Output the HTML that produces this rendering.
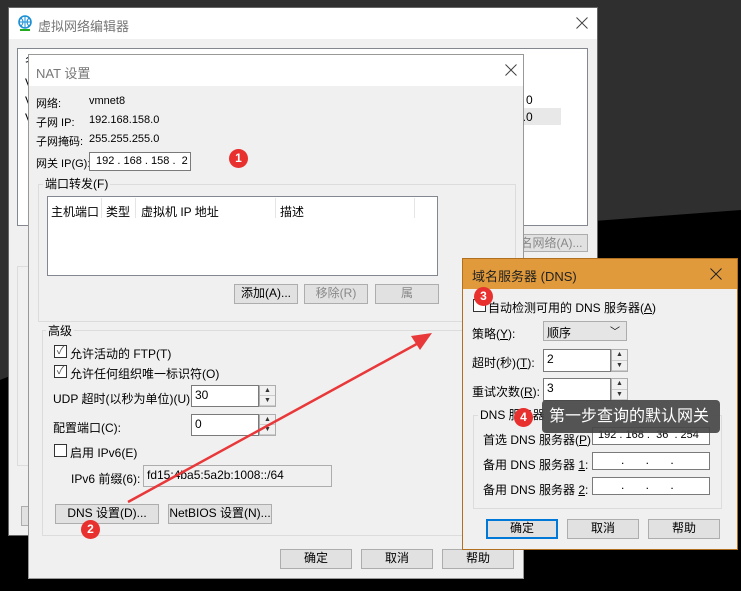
<!DOCTYPE html>
<html><head><meta charset="utf-8"><style>
*{margin:0;padding:0;box-sizing:border-box}
body{width:741px;height:591px;overflow:hidden;background:#000;position:relative;font-family:"Liberation Sans","Noto Sans CJK SC",sans-serif;font-size:12px;color:#000}
.a{position:absolute;white-space:nowrap}
.win{position:absolute;background:#f0f0f0;border:1px solid #888}
.tb{position:absolute;left:0;right:0;top:0;background:#fff}
.btn{position:absolute;background:#e1e1e1;border:1px solid #adadad;text-align:center;line-height:17px;white-space:nowrap}
.inp{position:absolute;background:#fff;border:1px solid #7a7a7a;white-space:nowrap;overflow:hidden}
.grp{position:absolute;border:1px solid #dcdcdc}
.lbl{position:absolute;background:#f0f0f0;padding:0 2px;line-height:14px;white-space:nowrap}
.cb{position:absolute;width:13px;height:13px;border:1px solid #333;background:#fff}
.badge{position:absolute;width:19px;height:19px;border-radius:50%;background:#e8302e;color:#fff;font-size:12px;font-weight:bold;text-align:center;line-height:19px}
.spin{position:absolute;width:17px;border:1px solid #adadad;background:#f0f0f0}
.spin div{height:50%;border-bottom:1px solid #ccc;font-size:7px;text-align:center;line-height:9px;color:#333}
.x{position:absolute}
.sm{font-size:11px}
</style></head><body>
<svg class="a" style="left:0;top:0" width="741" height="591"><polygon points="0,0 741,0 741,210 500,228 300,280 100,340 0,380" fill="#2f2f2f"/></svg>

<div class="win" style="left:8px;top:7px;width:590px;height:529px;border-color:#666">
 <div class="tb" style="height:31px"></div>
 <svg class="a" style="left:8px;top:7px" width="16" height="17"><circle cx="8" cy="7" r="6" fill="none" stroke="#1a8fd6" stroke-width="1.6"/><path d="M2 7h12M8 1v12M4 3q4 4 0 8M12 3q-4 4 0 8" stroke="#1a8fd6" fill="none"/><path d="M3 15h10" stroke="#2a2" stroke-width="2"/></svg>
 <div class="a" style="left:29px;top:8px;font-size:13px;color:#777">虚拟网络编辑器</div>
 <svg class="x" style="left:567px;top:9px" width="12" height="12"><path d="M0.5 0.5L11.5 11.5M11.5 0.5L0.5 11.5" stroke="#444" stroke-width="1"/></svg>
 <div class="a" style="left:8px;top:40px;width:571px;height:178px;background:#fff;border:1px solid #828790"></div>
 <div class="a" style="left:500px;top:100px;width:52px;height:17px;background:#e8e8e8"></div>
 <div class="a" style="left:517px;top:85px">0</div>
 <div class="a" style="left:507px;top:102px">3.0</div>
 <div class="a" style="left:16px;top:44px">名</div>
 <div class="a" style="left:16px;top:68px">V</div>
 <div class="a" style="left:16px;top:86px">V</div>
 <div class="a" style="left:16px;top:103px">V</div>
 <div class="btn" style="left:506px;top:226px;width:73px;height:18px;color:#888">名网络(A)...</div>
 <div class="grp" style="left:8px;top:258px;width:30px;height:200px"></div>
 <div class="btn" style="left:12px;top:498px;width:30px;height:20px">还</div>
</div>

<div class="win" style="left:28px;top:54px;width:496px;height:525px;border-color:#999">
 <div class="tb" style="height:31px"></div>
 <div class="a" style="left:7px;top:8px;font-size:13px;color:#777">NAT 设置</div>
 <svg class="x" style="left:476px;top:9px" width="12" height="12"><path d="M0.5 0.5L11.5 11.5M11.5 0.5L0.5 11.5" stroke="#444" stroke-width="1"/></svg>
 <div class="a sm" style="left:7px;top:40px">网络:</div><div class="a sm" style="left:60px;top:40px">vmnet8</div>
 <div class="a sm" style="left:7px;top:59px">子网 IP:</div><div class="a sm" style="left:60px;top:59px">192.168.158.0</div>
 <div class="a sm" style="left:7px;top:78px">子网掩码:</div><div class="a sm" style="left:60px;top:78px">255.255.255.0</div>
 <div class="a sm" style="left:7px;top:100px">网关 IP(G):</div>
 <div class="inp sm" style="left:60px;top:97px;width:102px;height:19px;padding:2px 0 0 6px">192 . 168 . 158 .&nbsp; 2</div>
 <div class="grp" style="left:9px;top:129px;width:478px;height:138px"></div>
 <div class="lbl" style="left:14px;top:122px">端口转发(F)</div>
 <div class="a" style="left:18px;top:141px;width:391px;height:80px;background:#fff;border:1px solid #828790"></div>
 <div class="a" style="left:22px;top:148px">主机端口</div>
 <div class="a" style="left:72px;top:143px;width:1px;height:20px;background:#e5e5e5"></div>
 <div class="a" style="left:77px;top:148px">类型</div>
 <div class="a" style="left:106px;top:143px;width:1px;height:20px;background:#e5e5e5"></div>
 <div class="a" style="left:112px;top:148px">虚拟机 IP 地址</div>
 <div class="a" style="left:246px;top:143px;width:1px;height:20px;background:#e5e5e5"></div>
 <div class="a" style="left:251px;top:148px">描述</div>
 <div class="a" style="left:385px;top:143px;width:1px;height:20px;background:#e5e5e5"></div>
 <div class="btn" style="left:205px;top:229px;width:64px;height:20px">添加(A)...</div>
 <div class="btn" style="left:275px;top:229px;width:64px;height:20px;color:#888">移除(R)</div>
 <div class="btn" style="left:346px;top:229px;width:64px;height:20px;color:#888">属</div>
 <div class="grp" style="left:13px;top:275px;width:474px;height:206px"></div>
 <div class="lbl" style="left:17px;top:269px">高级</div>
 <div class="cb" style="left:25px;top:290px;font-size:11px;line-height:11px;text-align:center;color:#555">✓</div><div class="a" style="left:41px;top:290px">允许活动的 FTP(T)</div>
 <div class="cb" style="left:25px;top:310px;font-size:11px;line-height:11px;text-align:center;color:#555">✓</div><div class="a" style="left:41px;top:310px">允许任何组织唯一标识符(O)</div>
 <div class="a" style="left:24px;top:335px">UDP 超时(以秒为单位)(U):</div>
 <div class="inp" style="left:162px;top:330px;width:68px;height:22px;padding:2px 3px">30</div>
 <div class="spin" style="left:230px;top:330px;height:22px"><div>▲</div><div>▼</div></div>
 <div class="a" style="left:24px;top:364px">配置端口(C):</div>
 <div class="inp" style="left:162px;top:359px;width:68px;height:22px;padding:2px 3px">0</div>
 <div class="spin" style="left:230px;top:359px;height:22px"><div>▲</div><div>▼</div></div>
 <div class="cb" style="left:25px;top:389px"></div><div class="a" style="left:41px;top:389px">启用 IPv6(E)</div>
 <div class="a" style="left:42px;top:415px">IPv6 前缀(6):</div>
 <div class="inp" style="left:114px;top:410px;width:189px;height:22px;padding:2px 3px;background:#f0f0f0;border-color:#adadad">fd15:4ba5:5a2b:1008::/64</div>
 <div class="btn" style="left:26px;top:449px;width:104px;height:20px">DNS 设置(D)...</div>
 <div class="btn" style="left:139px;top:449px;width:104px;height:20px">NetBIOS 设置(N)...</div>
 <div class="btn" style="left:251px;top:494px;width:72px;height:20px">确定</div>
 <div class="btn" style="left:332px;top:494px;width:72px;height:20px">取消</div>
 <div class="btn" style="left:413px;top:494px;width:72px;height:20px">帮助</div>
</div>

<div class="win" style="left:462px;top:258px;width:276px;height:292px;border-color:#b07020">
 <div class="tb" style="height:30px;background:#e09a3b"></div>
 <div class="a" style="left:9px;top:7px;font-size:13px;color:#222">域名服务器 (DNS)</div>
 <svg class="x" style="left:247px;top:9px" width="12" height="12"><path d="M0.5 0.5L11.5 11.5M11.5 0.5L0.5 11.5" stroke="#222" stroke-width="1"/></svg>
 <div class="cb" style="left:10px;top:40px"></div><div class="a" style="left:25px;top:40px">自动检测可用的 DNS 服务器(<u>A</u>)</div>
 <div class="a" style="left:9px;top:66px">策略(<u>Y</u>):</div>
 <div class="a" style="left:80px;top:62px;width:84px;height:20px;background:#e5e5e5;border:1px solid #adadad;padding:2px 3px">顺序<span style="position:absolute;right:6px;top:1px;font-size:10px">﹀</span></div>
 <div class="a" style="left:9px;top:95px">超时(秒)(<u>T</u>):</div>
 <div class="inp" style="left:80px;top:90px;width:68px;height:23px;padding:2px 3px">2</div>
 <div class="spin" style="left:148px;top:90px;height:23px"><div>▲</div><div>▼</div></div>
 <div class="a" style="left:9px;top:124px">重试次数(<u>R</u>):</div>
 <div class="inp" style="left:80px;top:119px;width:68px;height:23px;padding:2px 3px">3</div>
 <div class="spin" style="left:148px;top:119px;height:23px"><div>▲</div><div>▼</div></div>
 <div class="grp" style="left:10px;top:156px;width:249px;height:94px"></div>
 <div class="lbl" style="left:15px;top:149px">DNS 服务器</div>
 <div class="a" style="left:20px;top:172px">首选 DNS 服务器(<u>P</u>):</div>
 <div class="inp sm" style="left:129px;top:168px;width:118px;height:18px;padding:1px 5px">192 . 168 .&nbsp; 36 &nbsp;. 254</div>
 <div class="a" style="left:20px;top:197px">备用 DNS 服务器 <u>1</u>:</div>
 <div class="inp" style="left:129px;top:193px;width:118px;height:18px;padding:0 28px;word-spacing:18px">. . .</div>
 <div class="a" style="left:20px;top:222px">备用 DNS 服务器 <u>2</u>:</div>
 <div class="inp" style="left:129px;top:218px;width:118px;height:18px;padding:0 28px;word-spacing:18px">. . .</div>
 <div class="btn" style="left:23px;top:260px;width:72px;height:20px;border:2px solid #0078d7;line-height:15px">确定</div>
 <div class="btn" style="left:104px;top:260px;width:72px;height:20px">取消</div>
 <div class="btn" style="left:185px;top:260px;width:72px;height:20px">帮助</div>
</div>

<div class="a" style="left:542px;top:400px;width:178px;height:33px;background:rgba(70,70,70,0.92);border-radius:4px;color:#fff;font-size:16px;line-height:33px;padding-left:7px">第一步查询的默认网关</div>

<svg class="a" style="left:0;top:0" width="741" height="591"><path d="M128 502 L424 340" stroke="#e8383a" stroke-width="2.5"/><polygon points="432,333 411,336 420,350" fill="#e8383a"/></svg>

<div class="badge" style="left:229px;top:149px">1</div>
<div class="badge" style="left:81px;top:520px">2</div>
<div class="badge" style="left:474px;top:287px">3</div>
<div class="badge" style="left:514px;top:408px">4</div>
</body></html>
